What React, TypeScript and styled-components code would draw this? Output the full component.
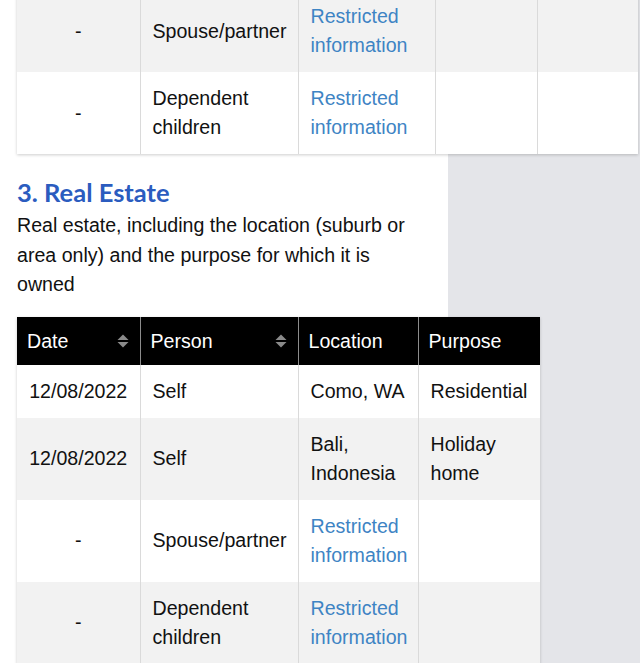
import React from "react";
import styled, { createGlobalStyle } from "styled-components";

const GlobalStyle = createGlobalStyle`
  html, body {
    margin: 0;
    padding: 0;
    background: #e4e5e9;
  }
  body {
    font-family: "Liberation Sans", Arial, sans-serif;
    color: #111;
    overflow: hidden;
  }
`;

const Page = styled.main`
  width: 448px;
  min-height: 663px;
  box-sizing: border-box;
  padding: 0 0 40px 17px;
  background: #ffffff;
`;

const Table = styled.table<{ $width: number; $offset?: number }>`
  border-collapse: collapse;
  table-layout: fixed;
  width: ${(p) => p.$width}px;
  margin-top: ${(p) => p.$offset ?? 0}px;
  background: #ffffff;
  box-shadow: 0 1px 3px rgba(0, 0, 0, 0.2);
  font-size: 19.6px;
  line-height: 29px;
`;

const Col = styled.col<{ $w: number }>`
  width: ${(p) => p.$w}px;
`;

const HeadRow = styled.tr`
  background: #000000;
`;

const Th = styled.th`
  position: relative;
  height: 48px;
  padding: 0 10px;
  text-align: left;
  font-weight: 400;
  color: #ffffff;
  line-height: 24px;
  border-left: 1px solid #8c8c8c;
  &:first-child {
    border-left: none;
  }
`;

const Row = styled.tr<{ $shade: boolean }>`
  background: ${(p) => (p.$shade ? "#f2f2f2" : "#ffffff")};
`;

const Td = styled.td<{ $center?: boolean }>`
  padding: 12px 12px;
  vertical-align: middle;
  text-align: ${(p) => (p.$center ? "center" : "left")};
  border-left: 1px solid #dadada;
  &:first-child {
    border-left: none;
  }
`;

const Restricted = styled.span`
  color: #3e84c4;
`;

const Heading = styled.h2`
  margin: 22px 0 3px;
  font-family: "Lato", "Open Sans", sans-serif;
  font-weight: 700;
  font-size: 25.5px;
  line-height: 32px;
  color: #2b5cbf;
`;

const Lead = styled.p`
  margin: 0 0 17px;
  max-width: 405px;
  font-size: 19.6px;
  line-height: 29.5px;
`;

const SortIcon = styled.svg`
  position: absolute;
  right: 11px;
  top: 50%;
  margin-top: -7px;
  width: 12px;
  height: 14px;
`;

const Sort = () => (
  <SortIcon viewBox="0 0 12 14" aria-hidden="true">
    <path d="M6 0.5 L11.5 6 L0.5 6 Z" fill="#8a8a8a" />
    <path d="M6 13.5 L11.5 8 L0.5 8 Z" fill="#8a8a8a" />
  </SortIcon>
);

type Cell = { text: string; restricted?: boolean };

const topRows: Cell[][] = [
  [
    { text: "-" },
    { text: "Spouse/partner" },
    { text: "Restricted information", restricted: true },
    { text: "" },
    { text: "" },
  ],
  [
    { text: "-" },
    { text: "Dependent children" },
    { text: "Restricted information", restricted: true },
    { text: "" },
    { text: "" },
  ],
];

const estateRows: Cell[][] = [
  [{ text: "12/08/2022" }, { text: "Self" }, { text: "Como, WA" }, { text: "Residential" }],
  [{ text: "12/08/2022" }, { text: "Self" }, { text: "Bali, Indonesia" }, { text: "Holiday home" }],
  [
    { text: "-" },
    { text: "Spouse/partner" },
    { text: "Restricted information", restricted: true },
    { text: "" },
  ],
  [
    { text: "-" },
    { text: "Dependent children" },
    { text: "Restricted information", restricted: true },
    { text: "" },
  ],
];

const renderCell = (c: Cell, i: number) => (
  <Td key={i} $center={i === 0}>
    {c.restricted ? <Restricted>{c.text}</Restricted> : c.text}
  </Td>
);

export default function App() {
  return (
    <>
      <GlobalStyle />
      <Page>
        <Table $width={621} $offset={-10}>
          <colgroup>
            {[123, 158, 137, 102, 101].map((w, i) => (
              <Col key={i} $w={w} />
            ))}
          </colgroup>
          <tbody>
            {topRows.map((r, ri) => (
              <Row key={ri} $shade={ri % 2 === 0}>
                {r.map(renderCell)}
              </Row>
            ))}
          </tbody>
        </Table>

        <Heading>3. Real Estate</Heading>
        <Lead>
          Real estate, including the location (suburb or area only) and the purpose for which it is owned
        </Lead>

        <Table $width={523}>
          <colgroup>
            {[123, 158, 120, 122].map((w, i) => (
              <Col key={i} $w={w} />
            ))}
          </colgroup>
          <thead>
            <HeadRow>
              <Th>
                Date
                <Sort />
              </Th>
              <Th>
                Person
                <Sort />
              </Th>
              <Th>Location</Th>
              <Th>Purpose</Th>
            </HeadRow>
          </thead>
          <tbody>
            {estateRows.map((r, ri) => (
              <Row key={ri} $shade={ri % 2 === 1}>
                {r.map(renderCell)}
              </Row>
            ))}
          </tbody>
        </Table>
      </Page>
    </>
  );
}
